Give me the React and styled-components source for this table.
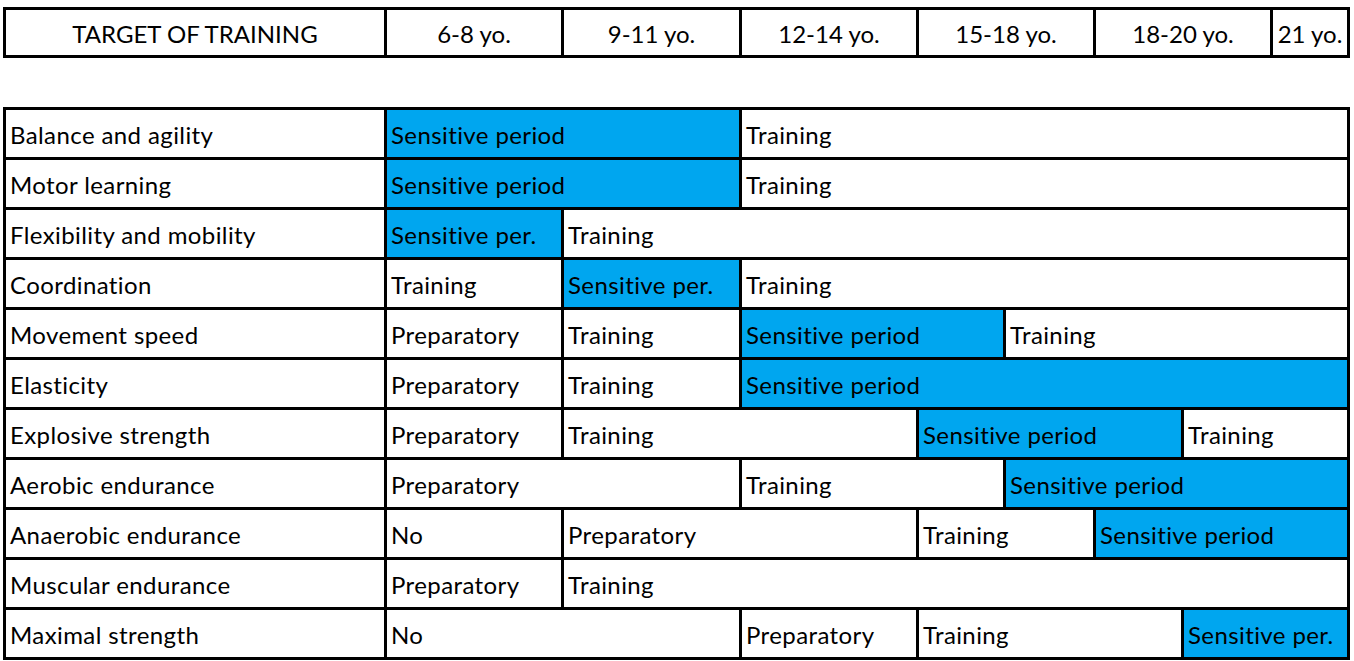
import React from 'react';
import styled, { createGlobalStyle } from 'styled-components';

const GlobalStyle = createGlobalStyle`
  body {
    margin: 0;
    background: #fff;
    font-family: Lato, "Liberation Sans", sans-serif;
    color: #000;
  }
`;

const Page = styled.div`
  padding: 7px 0 0 3px;
  display: flex;
  flex-direction: column;
  gap: 49px;
  width: 1347px;
`;

const Grid = styled.div`
  display: grid;
  grid-template-columns: ${(p) => p.$cols};
  grid-auto-rows: ${(p) => p.$rowHeight}px;
  gap: 3px;
  padding: 3px;
  background: #000;
`;

const HeadCell = styled.div`
  background: #fff;
  display: flex;
  align-items: center;
  justify-content: center;
  font-size: 24px;
  padding-top: 1px;
  white-space: nowrap;
  overflow: hidden;
`;

const Cell = styled.div`
  grid-column: span ${(p) => p.$span || 1};
  background: ${(p) => (p.$blue ? '#00a6ef' : '#fff')};
  display: flex;
  align-items: center;
  padding: 1px 0 0 4px;
  font-size: 24px;
  letter-spacing: 0.4px;
  white-space: nowrap;
  overflow: hidden;
`;

const headers = ['TARGET OF TRAINING', '6-8 yo.', '9-11 yo.', '12-14 yo.', '15-18 yo.', '18-20 yo.', '21 yo.'];

const rows = [
  ['Balance and agility', [['Sensitive period', 2, true], ['Training', 5]]],
  ['Motor learning', [['Sensitive period', 2, true], ['Training', 5]]],
  ['Flexibility and mobility', [['Sensitive per.', 1, true], ['Training', 6]]],
  ['Coordination', [['Training', 1], ['Sensitive per.', 1, true], ['Training', 5]]],
  ['Movement speed', [['Preparatory', 1], ['Training', 1], ['Sensitive period', 2, true], ['Training', 3]]],
  ['Elasticity', [['Preparatory', 1], ['Training', 1], ['Sensitive period', 5, true]]],
  ['Explosive strength', [['Preparatory', 1], ['Training', 2], ['Sensitive period', 3, true], ['Training', 1]]],
  ['Aerobic endurance', [['Preparatory', 2], ['Training', 2], ['Sensitive period', 3, true]]],
  ['Anaerobic endurance', [['No', 1], ['Preparatory', 2], ['Training', 2], ['Sensitive period', 2, true]]],
  ['Muscular endurance', [['Preparatory', 1], ['Training', 6]]],
  ['Maximal strength', [['No', 2], ['Preparatory', 1], ['Training', 3], ['Sensitive per.', 1, true]]],
];

export default function App() {
  return (
    <>
      <GlobalStyle />
      <Page>
        <Grid $cols="378px 174px 175px 174px 174px 174px 74px" $rowHeight={45}>
          {headers.map((h) => (
            <HeadCell key={h}>{h}</HeadCell>
          ))}
        </Grid>
        <Grid $cols="378px 174px 175px 174px 84px 87px 85px 163px" $rowHeight={47}>
          {rows.map(([label, cells]) => (
            <React.Fragment key={label}>
              <Cell>{label}</Cell>
              {cells.map(([text, span, blue], i) => (
                <Cell key={i} $span={span} $blue={blue}>
                  {text}
                </Cell>
              ))}
            </React.Fragment>
          ))}
        </Grid>
      </Page>
    </>
  );
}
